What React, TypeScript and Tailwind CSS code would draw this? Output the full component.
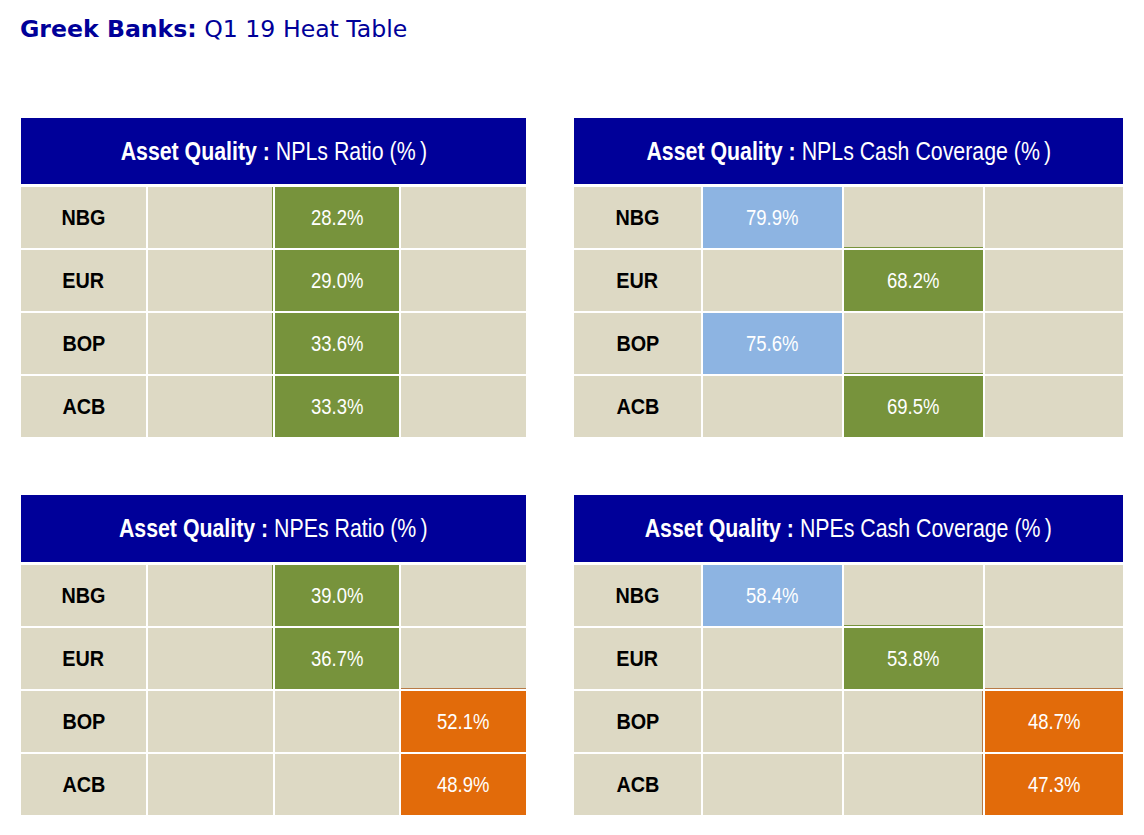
import React from "react";

type Kind = "g" | "b" | "o" | undefined;
type Cell = { v?: string; k?: Kind; r?: "g" | "o"; bt?: "g" | "o" };
type Row = { label: string; cells: Cell[] };

const bgFor: Record<string, string> = {
  g: "bg-[#77933C]",
  b: "bg-[#8DB4E2]",
  o: "bg-[#E26B0A]",
  n: "bg-[#DDD9C4]",
};
const rLine: Record<string, string> = {
  g: "border-r border-r-[#77933C]",
  o: "border-r border-r-[#B87A45]",
};
const bLine: Record<string, string> = {
  g: "border-b border-b-[#77933C]",
  o: "border-b border-b-[#B87A45]",
};

const cellFont = {
  fontFamily: '"Liberation Sans", Arial, sans-serif',
};

function HeatTable({
  title,
  rows,
  cols,
  headerH,
}: {
  title: string;
  rows: Row[];
  cols: string;
  headerH: string;
}) {
  return (
    <div className="flex flex-col" style={cellFont}>
      <div
        className={`${headerH} bg-[#000099] flex items-center justify-center text-white text-[26px]`}
      >
        <span className="inline-block whitespace-nowrap scale-x-[0.82]">
          <span className="font-bold">Asset Quality :</span> {title} (%{"\u2009"})
        </span>
      </div>
      <div className={`mt-[3px] grid ${cols} gap-x-[2px] gap-y-[2px]`}>
        {rows.map((row) => (
          <React.Fragment key={row.label}>
            <div className="h-[61px] bg-[#DDD9C4] flex items-center justify-center font-bold text-[22px] text-black">
              <span className="inline-block scale-x-[0.9]">{row.label}</span>
            </div>
            {row.cells.map((c, i) => (
              <div
                key={i}
                className={`h-[61px] box-border flex items-center justify-center text-[22px] text-white ${
                  bgFor[c.k ?? "n"]
                } ${c.r ? rLine[c.r] : ""} ${c.bt ? bLine[c.bt] : ""}`}
              >
                {c.v ? <span className="inline-block scale-x-[0.84]">{c.v}</span> : null}
              </div>
            ))}
          </React.Fragment>
        ))}
      </div>
    </div>
  );
}

const t1: Row[] = [
  { label: "NBG", cells: [{ r: "g" }, { v: "28.2%", k: "g" }, {}] },
  { label: "EUR", cells: [{ r: "g" }, { v: "29.0%", k: "g" }, {}] },
  { label: "BOP", cells: [{ r: "g" }, { v: "33.6%", k: "g" }, {}] },
  { label: "ACB", cells: [{ r: "g" }, { v: "33.3%", k: "g" }, {}] },
];
const t2: Row[] = [
  { label: "NBG", cells: [{ v: "79.9%", k: "b" }, { bt: "g" }, {}] },
  { label: "EUR", cells: [{}, { v: "68.2%", k: "g" }, {}] },
  { label: "BOP", cells: [{ v: "75.6%", k: "b" }, { bt: "g" }, {}] },
  { label: "ACB", cells: [{}, { v: "69.5%", k: "g" }, {}] },
];
const t3: Row[] = [
  { label: "NBG", cells: [{ r: "g" }, { v: "39.0%", k: "g" }, {}] },
  { label: "EUR", cells: [{ r: "g" }, { v: "36.7%", k: "g" }, { bt: "o" }] },
  { label: "BOP", cells: [{}, {}, { v: "52.1%", k: "o" }] },
  { label: "ACB", cells: [{}, {}, { v: "48.9%", k: "o" }] },
];
const t4: Row[] = [
  { label: "NBG", cells: [{ v: "58.4%", k: "b" }, { bt: "g" }, {}] },
  { label: "EUR", cells: [{}, { v: "53.8%", k: "g" }, { bt: "o" }] },
  { label: "BOP", cells: [{}, { r: "o" }, { v: "48.7%", k: "o" }] },
  { label: "ACB", cells: [{}, { r: "o" }, { v: "47.3%", k: "o" }] },
];

export default function App() {
  const L = "grid-cols-[125px_125px_124px_125px]";
  const R = "grid-cols-[127px_139px_139px_138px]";
  return (
    <div className="w-[1144px] h-[835px] bg-white overflow-hidden">
      <div
        className="pl-[20px] pt-[16px] leading-[27px] text-[23.6px] text-[#000099]"
        style={{ fontFamily: '"DejaVu Sans", Verdana, sans-serif' }}
      >
        <span className="font-bold">Greek Banks:</span> Q1 19 Heat Table
      </div>
      <div className="ml-[21px] mt-[75px] grid grid-cols-[505px_549px] gap-x-[48px] gap-y-[58px]">
        <HeatTable title="NPLs Ratio" rows={t1} cols={L} headerH="h-[66px]" />
        <HeatTable title="NPLs Cash Coverage" rows={t2} cols={R} headerH="h-[66px]" />
        <HeatTable title="NPEs Ratio" rows={t3} cols={L} headerH="h-[67px]" />
        <HeatTable title="NPEs Cash Coverage" rows={t4} cols={R} headerH="h-[67px]" />
      </div>
    </div>
  );
}
